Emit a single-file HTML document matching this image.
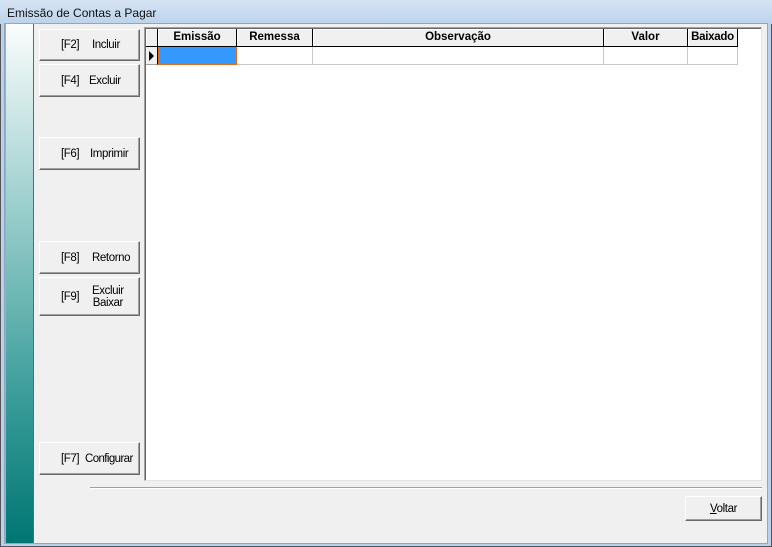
<!DOCTYPE html>
<html><head><meta charset="utf-8"><style>
*{margin:0;padding:0;box-sizing:border-box}
body{width:772px;height:547px;overflow:hidden;background:#f0f0f0;font-family:"Liberation Sans",sans-serif;position:relative}
.frame{position:absolute;left:0;top:0;width:772px;height:547px;border:1px solid #555;border-top:none;background:linear-gradient(#c6d9ec,#b9d1ea 30px,#b9d1ea)}
.title{position:absolute;left:0;top:0;width:772px;height:24px;background:linear-gradient(#d6e4f3,#bcd3ec);}
.title span{position:absolute;left:7px;top:6px;font-size:12px;color:#111}
.client{position:absolute;left:4px;top:23px;width:764px;height:521px;background:#f0f0f0;border:1px solid #8ea7c4}
.side{position:absolute;left:5px;top:24px;width:29px;height:519px;background:linear-gradient(#fbfdfd,#a9d6d4 30%,#3f9f9c 70%,#007673);border-right:1px solid #666;border-left:1px solid #aaa}
.btn{position:absolute;left:39px;width:101px;background:#f0f0f0;border:1px solid;border-color:#fff #696969 #696969 #fff;box-shadow:inset -1px -1px 0 #a0a0a0;font-size:11.5px;letter-spacing:-0.4px;color:#000;display:flex;align-items:center}
.btn .k{position:absolute;left:21px}
.btn .l{position:absolute;left:52px;text-align:center}
.grid{position:absolute;left:144px;top:27px;width:618px;height:454px;background:#fff;border:1px solid;border-color:#a0a0a0 #e3e3e3 #e3e3e3 #a0a0a0;box-shadow:inset 1px 1px 0 #696969}
.hd{position:absolute;top:1px;height:18px;background:#f0f0f0;border-right:1px solid #000;border-bottom:1px solid #000;box-shadow:inset 1px 1px 0 #fff;font-size:11.5px;font-weight:bold;text-align:center;line-height:17px;letter-spacing:0}
.cell{position:absolute;top:19px;height:18px;border-right:1px solid #c8c8c8;border-bottom:1px solid #c8c8c8}
.sep{position:absolute;left:90px;top:487px;width:672px;height:2px;border-top:1px solid #a0a0a0;border-bottom:1px solid #fff}
</style></head><body>
<div class="frame"></div>
<div class="title"><span>Emissão de Contas a Pagar</span></div>
<div class="client"></div>
<div class="side"></div>

<div class="btn" style="top:29px;height:32px"><span class="k">[F2]</span><span class="l" style="left:52px">Incluir</span></div>
<div class="btn" style="top:64px;height:33px"><span class="k">[F4]</span><span class="l" style="left:49px">Excluir</span></div>
<div class="btn" style="top:137px;height:33px"><span class="k">[F6]</span><span class="l" style="left:50px">Imprimir</span></div>
<div class="btn" style="top:241px;height:33px"><span class="k">[F8]</span><span class="l" style="left:52px">Retorno</span></div>
<div class="btn" style="top:277px;height:39px"><span class="k">[F9]</span><span class="l" style="left:52px;line-height:12px">Excluir<br>Baixar</span></div>
<div class="btn" style="top:442px;height:33px"><span class="k" style="left:21px">[F7]</span><span class="l" style="left:45px;letter-spacing:-0.6px">Configurar</span></div>

<div class="grid">
 <div class="hd" style="left:1px;width:12px"></div>
 <div class="hd" style="left:13px;width:79px">Emissão</div>
 <div class="hd" style="left:92px;width:76px">Remessa</div>
 <div class="hd" style="left:168px;width:291px">Observação</div>
 <div class="hd" style="left:459px;width:84px">Valor</div>
 <div class="hd" style="left:543px;width:50px;letter-spacing:-0.3px">Baixado</div>
 <div class="cell" style="left:1px;width:12px;background:#f0f0f0;border-right:1px solid #000;border-bottom:1px solid #a0a0a0"><svg width="10" height="16" style="position:absolute;left:2px;top:1px"><path d="M1 3 L6 8 L1 13 Z" fill="#000"/></svg></div>
 <div class="cell" style="left:13px;width:79px;background:#3399ff;border:1px dotted #e07020"></div>
 <div class="cell" style="left:92px;width:76px"></div>
 <div class="cell" style="left:168px;width:291px"></div>
 <div class="cell" style="left:459px;width:84px"></div>
 <div class="cell" style="left:543px;width:50px"></div>
</div>

<div class="sep"></div>
<div class="btn" style="left:685px;top:496px;width:77px;height:25px;justify-content:center"><span><u>V</u>oltar</span></div>
</body></html>
